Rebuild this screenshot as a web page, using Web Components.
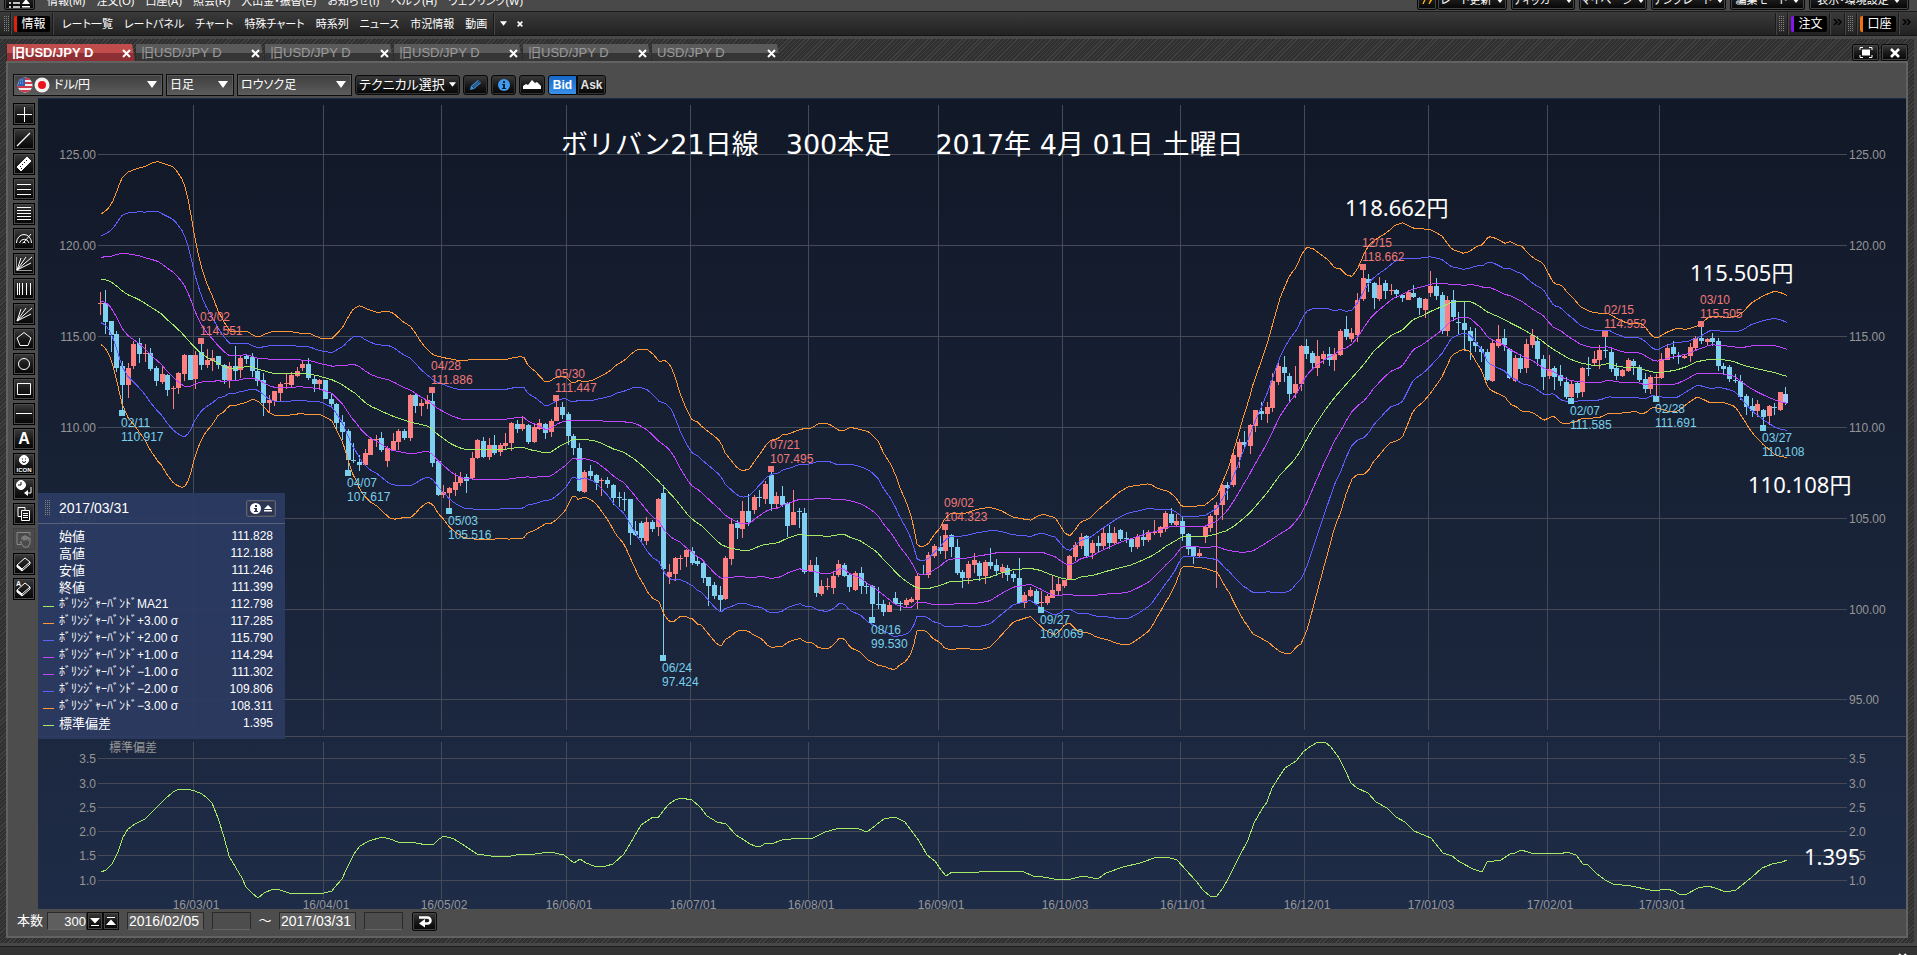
<!DOCTYPE html>
<html lang="ja">
<head>
<meta charset="utf-8">
<title>USD/JPY チャート</title>
<style>
  html, body { margin: 0; background: #484848; }
  body { min-height: 100vh; overflow: hidden; color: #fff;
    font: 12px/14px "Liberation Sans", "Noto Sans CJK JP", sans-serif; }
</style>
</head>
<body>
<app-window></app-window>

<script>
const BASE = `
  * { box-sizing: border-box; }
  button, input, select { font: inherit; color: inherit; margin: 0; padding: 0; }
  button { cursor: pointer; border: 1px solid #0a0a0a; border-radius: 2px;
    background: linear-gradient(#3c3c3c, #1a1a1a 50%, #050505); box-shadow: inset 0 0 0 1px #444; }
  svg { display: block; }
  .kana { font-feature-settings: "palt"; }
`;
function component(name, css, html, setup) {
  customElements.define(name, class extends HTMLElement {
    constructor() {
      super();
      const root = this.attachShadow({ mode: 'open' });
      const t = document.createElement('template');
      t.innerHTML = `<style>${BASE}${css}</style>${typeof html === 'function' ? html(this) : html}`;
      root.append(t.content.cloneNode(true));
      if (setup) setup(this, root);
    }
  });
}
const down = (w = 8) => `<svg width="${w}" height="5" viewBox="0 0 8 5"><path d="M0 0h8L4 5z" fill="#fff"/></svg>`;
const cross = `<svg width="9" height="9" viewBox="0 0 9 9"><path d="M1 1l7 7M8 1L1 8" stroke="currentColor" stroke-width="2" fill="none"/></svg>`;

/* ---------- menu bar ---------- */
component('menu-bar', `
  :host { display: flex; align-items: flex-end; height: 11px; overflow: hidden; background: #494949; padding: 0 8px 1px 4px; font-size: 11px; }
  .app { width: 31px; height: 18px; flex: none; margin-right: 12px; display: grid; place-items: center; padding-top: 4px; }
  nav { display: flex; gap: 11px; padding-bottom: 2px; }
  a { color: #fff; text-decoration: none; white-space: nowrap; }
  .right { margin-left: auto; display: flex; gap: 4px; }
  .right button { height: 20px; display: flex; align-items: center; justify-content: center; gap: 4px; white-space: nowrap; }
  .pair { display: flex; } .pair button:first-child { width: 20px; }
`, `
  <button class="app" aria-label="アプリ"><svg width="22" height="12" viewBox="0 0 22 12"><path d="M0 2h2M4 2h7M0 6h2M4 6h7M0 10h2M4 10h7" stroke="#fff" stroke-width="1.500"/><path d="M13 7l4-5 4 5zM13 9h8v1.500h-8z" fill="#fff"/></svg></button>
  <nav class="kana">
    ${['情報(M)', '注文(O)', '口座(A)', '照会(R)', '入出金・振替(E)', 'お知らせ(I)', 'ヘルプ(H)', 'ウェブリンク(W)'].map(t => `<a href="#">${t}</a>`).join('')}
  </nav>
  <div class="right kana">
    <span class="pair"><button aria-label="更新"><svg width="14" height="10" viewBox="0 0 14 10"><path d="M2 0l4 3-3 6 2-5-4-1zM8 0l5 3-4 6 2-5-4-1z" fill="#ffd21e" stroke="#ffb400"/></svg></button>
    <button style="width:70px">レート更新 ${down()}</button></span>
    ${[['ティッカー', 64], ['マイページ', 68], ['テンプレート', 75], ['編集モード', 75], ['表示・環境設定', 100]].map(([t, w]) => `<button style="width:${w}px">${t} ${down()}</button>`).join('')}
  </div>
`);

/* ---------- shortcut strip ---------- */
component('grip-dots', `
  :host { display: block; width: 6px; height: 16px; flex: none;
    background: linear-gradient(transparent 50%, var(--gap, #2e2e2e) 50%) 0 0 / 2px 2px,
      linear-gradient(90deg, #808080 50%, transparent 50%) 0 0 / 2px 2px; }
`, ``);
component('mode-chip', `
  :host { display: block; flex: none; margin: 0 2px; }
  button { height: 16px; width: 36px; border: 0; border-left: 3px solid var(--mark); background: #000; box-shadow: none; white-space: nowrap; }
`, `<button><slot></slot></button>`);
component('shortcut-strip', `
  :host { display: flex; align-items: center; height: 25px; padding: 0 4px; border-top: 1px solid #1c1c1c; border-bottom: 1px solid #151515;
    background: linear-gradient(#3a3a3a, #222); }
  nav { display: flex; gap: 11px; margin: 0 6px 0 8px; font-size: 11px; }
  a { color: #fff; text-decoration: none; white-space: nowrap; }
  i { width: 2px; height: 22px; flex: none; background: linear-gradient(90deg, #1a1a1a 50%, #444 50%); }
  .end { margin-left: auto; display: flex; align-items: center; }
  .bare { border: 0; background: none; box-shadow: none; display: grid; place-items: center; }
  .more { width: 13px; height: 18px; align-self: flex-start; color: #000; }
`, `
  <grip-dots></grip-dots><i></i><mode-chip style="--mark:#e0200c">情報</mode-chip><i></i>
  <nav class="kana">${['レート一覧', 'レートパネル', 'チャート', '特殊チャート', '時系列', 'ニュース', '市況情報', '動画'].map(t => `<a href="#">${t}</a>`).join('')}</nav>
  <i></i>
  <button class="bare" style="width:17px" aria-label="開く">${down(7)}</button>
  <button class="bare" style="width:15px" aria-label="閉じる"><svg width="6" height="6" viewBox="0 0 9 9"><path d="M1 1l7 7M8 1L1 8" stroke="#fff" stroke-width="2.500"/></svg></button>
  <div class="end">
    ${[['注文', '#8a12f0'], ['口座', '#f07010']].map(([t, c]) => `<i></i><grip-dots style="margin:0 2px"></grip-dots><i></i><mode-chip style="--mark:${c}">${t}</mode-chip><i></i>
    <button class="bare more" aria-label="もっと見る"><svg width="10" height="6" viewBox="0 0 10 6"><path d="M1 0l3 3-3 3M5 0l3 3-3 3" fill="none" stroke="#000" stroke-width="1.500"/></svg></button>`).join('')}
  </div>
`);

/* ---------- chart tabs ---------- */
component('chart-tab', `
  :host { display: flex; width: 129px; height: 17px; align-items: center; padding: 1px 4px 0 5px; font-size: 13px; color: #9a9a9a;
    border-left: 1px solid #2a2a2a; clip-path: polygon(1px 0, calc(100% - 3px) 0, 100% 100%, 0 100%);
    background: linear-gradient(#5a5a5a 0 50%, #353535 50%); }
  :host([active]) { background: linear-gradient(#c04c4c 0 50%, #8e2f34 50%); color: #fff; font-weight: bold; }
  .label { flex: 1; text-align: left; white-space: nowrap; }
  button { border: 0; background: none; box-shadow: none; }
  .x { color: #fff; }
`, `<button class="label"><slot></slot></button><button class="x" aria-label="タブを閉じる">${cross}</button>`);
component('tab-strip', `
  :host { display: flex; height: 22px; align-items: flex-end; padding: 0 6px; }
  .win { margin-left: auto; display: flex; gap: 2px; }
  .win button { width: 27px; height: 17px; display: grid; place-items: center; }
`, `
  <chart-tab active>旧USD/JPY D</chart-tab><chart-tab>旧USD/JPY D</chart-tab><chart-tab>旧USD/JPY D</chart-tab>
  <chart-tab>旧USD/JPY D</chart-tab><chart-tab>旧USD/JPY D</chart-tab><chart-tab>USD/JPY D</chart-tab>
  <div class="win">
    <button aria-label="最大化"><svg width="14" height="11" viewBox="0 0 14 11"><path d="M1 3V.5h3M10 .5h3V3M13 8v2.500h-3M4 10.500H1V8" fill="none" stroke="#fff"/><path d="M3 2.500h8v6H3z" fill="#fff"/></svg></button>
    <button aria-label="閉じる"><svg width="12" height="10" viewBox="0 0 12 10"><path d="M2 1l8 8M10 1L2 9" stroke="#fff" stroke-width="2.500"/></svg></button>
  </div>
`);

/* ---------- chart controls ---------- */
component('drop-box', `
  :host { display: flex; align-items: center; height: 22px; padding: 0 5px 0 3px; gap: 4px; border: 1px solid #0d0d0d;
    box-shadow: inset 0 0 0 1px #5c5c5c; background: linear-gradient(#3f3f3f, #5c5c5c); position: relative; }
  select { flex: 1; min-width: 0; height: 18px; appearance: none; border: 0; background: none; outline: 0; }
  svg { pointer-events: none; }
`, h => `<slot></slot><select class="kana" aria-label="${h.getAttribute('label')}"><option>${h.getAttribute('value')}</option></select><svg width="10" height="7" viewBox="0 0 10 7"><path d="M0 0h10L5 7z" fill="#fff"/></svg>`);
component('chart-controls', `
  :host { display: flex; align-items: center; height: 35px; padding: 8px 5px 0; gap: 3px; background: #4d4d4d; }
  button { height: 20px; width: 25px; display: grid; place-items: center; border-radius: 3px; box-shadow: inset 0 0 0 1px #333; }
  .tech { width: 105px; display: flex; align-items: center; justify-content: center; gap: 4px; font-size: 13px; white-space: nowrap; }
  .side { display: flex; } .side button { width: 29px; font-weight: bold; border-radius: 3px 0 0 3px; color: #e4e4e4; }
  .side button:first-child { background: linear-gradient(#1668c8, #3a90e8); box-shadow: none; color: #fff; }
  .side button:last-child { border-radius: 0 3px 3px 0; }
`, `
  <drop-box label="通貨ペア" value="ドル/円" style="width:150px">
    <svg width="33" height="16" viewBox="0 0 33 16"><defs><clipPath id="u"><circle cx="8" cy="8" r="7.500"/></clipPath></defs>
      <g clip-path="url(#u)"><path d="M0 0h16v16H0z" fill="#eee"/><path d="M0 2h16M0 6h16M0 10h16M0 14h16" stroke="#d0394a" stroke-width="2"/><path d="M0 0h8v9H0z" fill="#2f5fae"/><path d="M1 3h6M1 6h6" stroke="#9fc0f0" stroke-dasharray="1 1"/></g>
      <circle cx="25" cy="8" r="7.500" fill="#f6f2f2"/><circle cx="25" cy="8" r="4" fill="#e8141c"/></svg>
  </drop-box>
  <drop-box label="足種" value="日足" style="width:68px"></drop-box>
  <drop-box label="チャート種類" value="ロウソク足" style="width:115px"></drop-box>
  <button class="tech kana">テクニカル選択 ${down(7)}</button>
  <button aria-label="描画"><svg width="13" height="12" viewBox="0 0 13 12"><path d="M1 11l1-4 7-6 3 3-7 6z" fill="#3f8fe0"/><path d="M3 8l7-6M4 9l7-6" stroke="#16334f"/></svg></button>
  <button aria-label="情報"><svg width="12" height="12" viewBox="0 0 12 12"><circle cx="6" cy="6" r="6" fill="#3f9af0"/><path d="M5 2h2v2H5zM4 5h3v4h1v1H4V9h1V6H4z" fill="#10202e"/></svg></button>
  <button aria-label="エリア" style="width:26px"><svg width="18" height="9" viewBox="0 0 18 9"><path d="M0 9V6l3-2 2 1 4-5 3 3 2-1 4 4v3z" fill="#fff"/></svg></button>
  <span class="side"><button>Bid</button><button>Ask</button></span>
`);

/* ---------- drawing tools ---------- */
const ERASER = `<path d="M4 12l8-7 5 4-8 7z" fill="none"/><path d="M4 12l5 4v2l-5-4z" fill="#fff"/><path d="M9 18l8-7v-2"/>`;
const TOOLS = [
  ['十字線', '<path d="M11.500 4v15M4 11.500h15"/>'],
  ['直線', '<path d="M4 18L17 5" stroke-width="1.300"/>'],
  ['定規', '<path d="M4 14L14 4l4 4L8 18z" fill="#fff"/><path d="M7 13l1 1M9 11l1 1M11 9l1 1M13 7l1 1M8 16l1-1" stroke="#111" stroke-width="1"/>'],
  ['三本線', '<path d="M4 6.500h14M4 11.500h14M4 16.500h14"/>'],
  ['フィボナッチ', '<path d="M4 4.500h14M4 7.500h14M4 10.500h14M4 13.500h14M4 16.500h14"/>'],
  ['アーク', '<path d="M3.500 15a7.500 8.500 0 0 1 15 0M6.500 15a5 5.500 0 0 1 9.500 0M9.500 15a2 2 0 0 1 3 0M11 14l7-8"/>'],
  ['ファン軸', '<path d="M3.500 4v13.500H19" stroke="#999"/><path d="M4 17L8 5M4 17l9-13M4 17L19 4M4 17l14-7" />'],
  ['縦線', '<path d="M4.500 5v12M6.500 5v12M9.500 5v12M13.500 5v12M17.500 5v12"/>'],
  ['ファン', '<path d="M4 18L8 6M4 18l9-13M4 18L19 5M4 18l14-7"/>'],
  ['五角形', '<path d="M11 4.500l7 5.500-3 7.500H7L4 10z"/>'],
  ['円', '<circle cx="11" cy="11" r="5.500"/>'],
  ['四角形', '<path d="M4.500 5.500h13v11h-13z"/>'],
  ['水平線', '<path d="M3 10.500h16"/>'],
  ['文字', 'A'],
  ['アイコン', '<circle cx="11" cy="7" r="4.500" fill="#fff"/><path d="M9 6h1M12 6h1M9 8.500q2 2 4 0" stroke="#111"/><text x="11" y="19" text-anchor="middle" font-size="6" font-weight="bold" fill="#fff" stroke="none">ICON</text>'],
  ['時刻', '<circle cx="8" cy="7" r="4.500" fill="#fff"/><path d="M8 4v3H5" stroke="#111"/><path d="M18 9v6h-5"/><path d="M15 12l-4 3 4 3z" fill="#fff" stroke="none"/>'],
  ['コピー', '<path d="M5 4.500h7v3M5 4.500v9h3M8.500 7.500h8v10h-8zM10 10.500h5M10 12.500h5M10 14.500h5"/>'],
  ['手のひら', '<path d="M4 4.500h13v3M4 4.500v12h4M9 12V9h2v4M11 12V8h2v4M13 12V9h2v4M15 10h2v5l-2 4h-4l-4-5h2"/>'],
  ['消しゴム', ERASER],
  ['全消去', ERASER + '<text x="3" y="8" font-size="7" font-weight="bold" fill="#fff" stroke="none">A</text>'],
];
component('drawing-tools', `
  :host { display: flex; flex-direction: column; width: 30px; padding: 5px 0 0 5px; gap: 3px; background: #4d4d4d; flex: none; }
  button { width: 22px; height: 22px; flex: none; border-color: #000; border-radius: 0; box-shadow: inset 0 0 0 1px #4a4a4a; font-size: 16px; font-weight: bold; display: grid; place-items: center; }
  button svg { margin: -1px; }
  button:disabled { background: #4a4a4a; border-color: #3c3c3c; opacity: .8; color: #999; }
`, TOOLS.map(([n, d]) => `<button aria-label="${n}" ${n === '手のひら' ? 'disabled' : ''}>${d === 'A' ? 'A' :
  `<svg width="22" height="22" viewBox="0 0 22 22" fill="none" stroke="${n === '手のひら' ? '#999' : '#fff'}">${d}</svg>`}</button>`).join(''));

/* ---------- price chart ----------
   Each segment has its own origin; the values in it are thirds of a plot unit.
   ma = moving average, up = +3 sigma band, bars = colour x high top bottom low. */
const SEGMENTS = [
{ x: 0, y: 90,
  ma: '302,568 315,568 332,575 350,588 367,603 385,615 400,621 415,628 432,638 450,650 467,660 482,670 500,688 518,703 535,719 553,737 570,757 587,775 604,790 622,803 640,812 655,820 672,830 690,835 707,835 722,832 740,830 757,831 775,838 792,842 808,848 825,850 860,850 895,850',
  up: '302,373 320,360 335,342 350,305 365,265 382,247 400,240 418,233 435,230 450,221 472,214 490,221 505,225 520,231 530,243 545,265 557,295 570,355 580,420 592,480 605,535 620,580 640,625 655,665 672,695 688,723 720,723 740,723 760,736 775,742 800,730 820,724 860,724 890,727',
  bars: 'u302 606 638 642 675,d317 600 638 696 732,d335 693 693 735 786,d350 722 732 833 845,d368 813 828 885 960,u386 820 833 885 923,u401 753 762 828 837,d418 744 759 792 818,u436 762 788 791 817,d452 775 788 837 843,d470 828 834 873 888,u488 827 852 876 882,d503 852 855 900 918,u520 888 894 897 957,u536 846 849 894 911,u554 792 795 852 872,d571 795 795 870 870,u587 782 795 867 897,d605 762 786 825 840,u623 777 810 825 834,u638 780 803 813 843,d655 798 798 825 836,d674 822 825 870 882,u689 816 828 870 893,d707 768 828 843 870,u722 798 803 840 863,d740 792 798 806 821,d758 789 800 843 862,d773 806 842 872 888,d791 849 870 938 978,u809 915 930 938 970,u824 903 903 933 948,u842 876 882 909 936,u860 852 879 882 897,u875 846 855 885 890,u893 831 843 858 861,u908 812 822 834 843,d926 803 822 864 870,d944 858 867 882 906' },
{ x: 300, y: 280,
  ma: '0,280 35,283 60,289 95,299 125,313 150,330 170,343 190,363 210,378 230,387 250,396 275,407 300,416 330,426 360,433 385,439 400,450 415,465 430,475 450,490 470,500 490,507 530,508 570,508 600,508 625,507 650,503 675,503 690,509 710,513 740,520 755,515 775,501 800,488 820,477 835,480 855,478 890,484 920,497 940,507 970,516 1000,535 1030,560 1060,590 1075,602 1090,620 1110,640 1130,662 1150,688 1170,712 1190,728',
  up: '0,160 28,160 60,174 95,177 110,162 130,140 145,110 160,87 180,76 200,87 230,97 270,94 285,104 310,126 330,138 345,157 360,182 380,207 400,225 430,233 480,242 540,237 610,240 640,233 670,229 685,258 705,273 738,309 755,300 775,288 795,288 820,312 835,301 855,306 880,300 905,287 930,273 950,254 975,240 1000,216 1015,208 1042,208 1060,223 1077,244 1095,242 1110,253 1125,290 1140,340 1160,390 1177,420 1195,427',
  bars: 'u59 296 300 312 327,d76 300 300 357 357,d94 342 357 372 382,d109 368 372 429 453,d127 405 426 456 480,d146 447 453 540 570,d161 490 540 543 549,d179 525 545 555 573,u197 507 519 555 558,u212 477 477 525 525,u230 465 477 480 501,d245 456 474 510 516,u263 497 504 543 560,u281 459 483 510 513,u296 447 453 486 510,d314 447 453 474 480,u332 342 345 474 483,d347 339 345 378 399,u365 357 369 378 407,u382 345 360 372 387,d398 339 363 549 560,d416 540 543 645 648,u430 615 635 645 654,u449 621 624 639 684,u466 579 605 630 648,u482 576 591 609 618,d500 582 591 603 639,u518 516 534 595 600,u533 477 480 534 537,d551 471 483 531 534,u569 474 495 531 540,d583 465 495 519 525,u602 489 495 516 527,u617 459 489 498 507,u635 426 429 489 512,d652 420 432 447 459,u668 408 432 447 452,d686 432 435 486 491,u704 432 441 486 489,u719 417 429 447 450,d737 429 432 459 477,u755 417 423 456 471,u770 354 381 423 423,d788 366 381 405 416,d806 396 402 468 494,d821 462 468 504 525,d838 489 504 633 636,u854 570 575 636 639,d872 555 573 588 597,d890 582 585 609 629,u905 594 600 603 648,d922 591 600 612 624,d940 612 615 654 675,d957 636 651 654 680,d973 636 656 659 693,d992 656 657 759 795,d1007 723 753 765 768,d1025 723 729 774 782,u1040 711 726 783 795,d1058 720 726 747 756,u1076 654 657 741 768,d1090 615 639 867 1127,u1109 852 876 891 911,u1127 831 834 882 903,u1142 825 835 838 870,u1160 807 810 831 860,d1177 801 813 849 855,d1193 831 843 852 858' },
{ x: 700, y: 420,
  ma: '0,313 20,333 45,358 65,375 90,384 125,391 150,391 170,382 190,374 215,371 235,368 255,358 275,350 300,342 315,346 345,346 380,349 405,347 420,342 432,343 450,352 480,362 505,378 530,395 550,418 570,438 590,460 610,478 635,495 655,505 690,505 720,496 750,485 790,483 840,478 870,472 900,460 940,449 990,445 1020,451 1055,465 1085,475 1110,479 1130,477',
  up: '0,15 25,35 45,50 62,66 75,98 100,130 115,147 130,152 148,147 165,122 185,95 200,72 215,58 232,58 248,43 265,42 280,36 305,27 335,24 355,11 385,11 400,20 415,31 435,30 450,22 475,27 505,35 520,48 535,64 550,98 570,130 585,160 600,205 620,248 637,300 652,378 670,380 685,372 700,347 720,325 735,295 750,282 795,280 830,268 870,262 900,270 940,292 965,296 992,301 1015,287 1030,283 1065,293 1080,315 1092,336 1108,349 1125,330',
  bars: 'd10 423 429 474 489,d26 471 471 498 557,d44 486 495 528 537,d62 498 525 540 573,u77 408 414 537 540,u95 293 312 417 434,d113 300 309 324 357,u128 243 273 327 354,d146 222 273 306 318,u164 225 231 270 281,d179 210 231 234 261,u197 183 192 237 251,d215 156 164 252 272,u230 215 228 252 264,d248 198 228 255 261,d263 246 249 318 351,u281 210 276 315 315,d299 264 273 276 324,d314 264 279 456 462,u332 420 435 453 456,d349 411 435 519 531,u364 480 498 522 528,u382 474 497 500 510,u401 453 468 504 522,u416 420 432 465 471,d434 429 435 468 471,d449 462 465 501 516,u467 453 459 510 513,d484 441 459 498 522,d500 486 498 501 522,d518 495 498 552 592,d535 501 551 554 567,d551 540 552 576 588,u569 546 555 576 576,d587 516 534 552 555,d602 543 549 552 573,u620 534 540 555 560,u635 531 537 546 549,u653 462 468 540 567,d671 435 462 465 465,u686 396 405 465 474,u704 372 378 408 414,d722 348 381 393 402,u737 330 345 393 417,d755 342 345 381 411,d773 357 381 459 465,d788 450 456 474 504,u806 423 432 474 492,u824 399 420 435 459,d839 423 429 468 483,u857 420 426 468 492,d872 384 426 438 447,d890 417 435 453 468,u908 432 441 456 474,d923 435 444 465 483,d941 453 461 474 486,d959 414 474 549 552,u974 516 525 549 564,u992 501 510 528 531,d1010 507 513 552 555,u1025 513 546 549 561,u1043 522 528 549 555,u1058 468 510 534 534,u1076 474 492 513 525,u1094 480 480 498 504,u1109 405 408 480 480,u1127 366 375 411 423' },
{ x: 1080, y: 180,
  ma: '0,1191 40,1186 75,1175 110,1166 150,1156 180,1144 215,1128 240,1112 260,1097 285,1083 308,1069 340,1070 375,1070 405,1063 440,1052 465,1036 480,1024 510,998 530,975 560,940 600,885 640,843 660,815 673,790 700,743 740,683 770,645 810,600 850,555 880,515 910,487 935,465 965,452 1000,418 1030,406 1050,395 1080,382 1115,367 1140,364 1170,364 1190,374',
  up: '0,1027 30,1015 60,985 90,960 115,938 145,920 180,915 208,911 235,926 265,934 285,950 305,979 325,981 375,975 400,955 412,945 430,900 445,865 460,815 475,765 490,710 505,665 520,610 545,540 565,480 580,425 600,355 615,318 630,285 650,260 665,222 680,202 700,206 720,222 745,240 765,265 780,265 800,286 817,289 835,262 855,215 870,192 895,173 920,158 945,136 968,128 1000,145 1050,148 1085,167 1115,207 1150,220 1170,214 1190,199',
  bars: 'u5 1059 1071 1098 1107,d19 1065 1068 1128 1131,u37 1080 1089 1119 1137,d55 1068 1089 1098 1116,u71 1041 1059 1098 1107,d89 1035 1059 1089 1107,u104 1041 1059 1089 1092,d122 1047 1050 1077 1083,d139 1056 1073 1077 1089,d155 1074 1077 1101 1116,u173 1062 1071 1101 1107,d190 1050 1071 1080 1098,u206 1050 1056 1080 1086,u224 1020 1056 1059 1065,u242 1038 1041 1059 1071,u257 993 999 1047 1056,d275 985 1002 1029 1035,u290 1002 1023 1035 1041,d308 1011 1023 1062 1083,d326 1059 1062 1107 1125,d341 1098 1101 1128 1152,u359 1107 1119 1128 1134,u377 1035 1041 1068 1089,u392 1002 1008 1044 1056,u410 966 975 1005 1224,u428 912 915 975 1020,d443 906 915 924 960,u461 813 825 915 921,u479 777 786 831 864,d493 753 786 795 807,u512 732 735 798 822,u527 690 690 738 756,d545 666 693 702 720,u563 666 681 702 729,u578 579 603 684 696,u596 549 558 606 615,d613 528 561 579 606,d628 579 588 642 669,u646 558 612 639 654,u665 495 498 612 633,d680 477 498 522 537,d698 513 519 549 564,u713 480 528 564 588,u731 513 522 537 552,d748 501 522 540 558,u764 504 522 540 573,u782 447 453 525 528,d799 408 447 471 480,u815 444 459 477 486,u833 339 360 465 486,u851 270 294 357 363,d866 282 297 309 336,d884 306 309 354 387,u899 291 315 357 363,d917 300 309 333 357,u935 312 330 333 345,d950 327 330 342 354,d968 342 345 354 366,u986 330 336 360 360,d1001 315 339 351 354,d1019 351 354 384 405,u1037 354 357 390 414,u1052 273 318 339 351,d1070 294 318 348 360,d1088 336 345 453 462,u1103 348 360 453 468,d1121 330 360 411 423,d1136 396 426 429 462,d1154 366 429 450 512,d1172 441 453 483 540,d1187 444 486 498 516' },
{ x: 1480, y: 100,
  ma: '0,620 20,635 55,650 90,668 120,683 150,700 185,722 215,745 240,760 265,775 295,787 330,795 360,796 385,790 410,798 440,803 470,802 495,810 530,819 560,815 590,810 620,800 650,785 690,778 720,778 760,784 790,796 830,806 880,817 920,829',
  up: '0,437 8,434 25,409 45,414 75,430 90,424 110,435 125,437 140,455 160,474 190,490 205,520 222,552 242,553 262,577 285,600 300,619 330,635 360,640 385,640 410,655 440,669 480,669 495,680 515,707 530,715 560,697 590,685 620,688 655,677 690,648 740,652 770,650 790,635 815,608 850,587 885,573 905,579 920,586',
  bars: 'd5 738 747 756 786,d23 747 756 840 843,u38 720 729 843 846,u56 675 717 738 744,d73 687 714 735 753,d89 744 747 834 837,u107 765 774 843 846,d121 762 774 807 819,u140 717 732 804 819,u158 687 705 735 744,d173 708 723 777 798,d191 765 777 831 870,u208 765 807 828 837,d223 798 804 831 870,d242 795 825 843 858,d260 831 846 891 897,u274 843 852 891 894,d292 843 849 879 894,u308 801 804 876 891,d326 771 804 807 828,u344 753 777 789 795,u359 735 750 780 807,d377 711 750 753 774,d394 744 756 807 816,d410 789 804 828 840,u428 807 810 828 831,u446 774 780 813 816,d461 777 783 798 825,d479 795 801 840 846,d497 819 837 867 879,u512 825 831 867 882,u530 822 831 834 888,u545 759 777 834 837,u562 732 744 780 780,d581 723 741 762 777,d596 756 768 771 792,u614 762 768 774 777,u632 729 741 768 786,u647 708 714 744 750,d665 681 714 723 732,u683 714 717 726 738,d698 699 714 726 738,d716 714 723 798 813,d731 789 798 807 825,d749 795 801 837 846,d767 822 840 843 849,d782 825 843 891 900,d800 882 888 921 945,d818 894 918 933 951,u832 900 912 933 951,d850 927 930 951 975,u869 915 918 948 975,d884 909 921 924 945,u902 876 876 930 933,n917 861 882 909 915' },
];
const DEVIATION = '101,872 106,870 112,864 118,852 123,837 128,829 135,824 145,819 155,809 165,799 173,792 179,789 187,789 195,791 202,794 207,798 212,803 218,818 224,837 229,856 236,868 242,878 246,887 252,893 258,898 264,893 273,889 280,890 289,893 309,893 319,894 324,893 332,891 335,887 342,879 347,868 354,854 360,846 369,841 382,837 390,839 398,842 416,843 427,845 434,844 439,839 444,836 454,839 465,846 477,854 491,856 511,856 521,854 535,854 550,852 564,855 574,863 580,859 586,863 594,866 606,866 613,864 624,854 634,837 641,825 653,817 658,818 663,811 669,804 675,800 681,798 692,800 700,807 707,816 717,822 726,824 736,835 744,840 750,844 755,846 761,846 766,843 771,844 782,840 800,838 813,838 825,832 836,829 850,828 859,829 867,832 876,825 884,819 895,817 905,822 910,829 917,838 922,846 927,855 935,861 941,870 946,876 952,872 970,873 989,871 1012,871 1024,872 1033,876 1043,877 1060,880 1071,879 1083,876 1098,879 1106,873 1123,867 1140,863 1157,857 1167,857 1177,860 1186,870 1196,881 1203,890 1211,897 1217,896 1223,888 1228,879 1238,859 1248,840 1254,823 1262,809 1267,802 1272,788 1279,777 1285,768 1296,761 1304,751 1311,746 1318,742 1325,742 1331,747 1339,758 1346,772 1351,783 1357,788 1368,793 1376,802 1387,808 1396,817 1405,822 1414,831 1431,838 1443,853 1452,856 1460,862 1473,869 1482,872 1487,862 1501,860 1510,854 1515,853 1521,850 1528,852 1534,854 1547,853 1560,854 1567,852 1576,855 1583,864 1588,865 1596,873 1605,880 1613,884 1631,886 1650,890 1660,890 1667,889 1674,891 1679,894 1687,894 1698,888 1708,886 1715,888 1726,892 1736,890 1752,877 1762,868 1772,864 1782,862 1787,860';
const MONTHS = [[193, '16/03/01'], [323, '16/04/01'], [441, '16/05/02'], [566, '16/06/01'], [690, '16/07/01'], [808, '16/08/01'], [938, '16/09/01'], [1062, '16/10/03'], [1180, '16/11/01'], [1304, '16/12/01'], [1428, '17/01/03'], [1547, '17/02/01'], [1659, '17/03/01']];
const LEVELS = [[154, '125.00'], [245, '120.00'], [336, '115.00'], [427, '110.00'], [518, '105.00'], [609, '100.00'], [699, '95.00'], [758, '3.5'], [783, '3.0'], [807, '2.5'], [831, '2.0'], [855, '1.5'], [880, '1.0']];
const PEAKS = [
  [1, 198, 338, '03/02', '114.551'], [1, 429, 387, '04/28', '111.886'], [1, 553, 395, '05/30', '111.447'], [1, 768, 466, '07/21', '107.495'],
  [1, 942, 524, '09/02', '104.323'], [1, 1360, 264, '12/15', '118.662'], [1, 1602, 331, '02/15', '114.952'], [1, 1698, 321, '03/10', '115.505'],
  [0, 119, 410, '02/11', '110.917'], [0, 345, 470, '04/07', '107.617'], [0, 446, 508, '05/03', '105.516'], [0, 660, 655, '06/24', '97.424'],
  [0, 869, 617, '08/16', '99.530'], [0, 1038, 607, '09/27', '100.069'], [0, 1568, 398, '02/07', '111.585'], [0, 1653, 396, '02/28', '111.691'], [0, 1760, 425, '03/27', '110.108']];
const NOTES = [[1345, 216, '118.662円'], [1690, 281, '115.505円'], [1748, 493, '110.108円'], [1804, 865, '1.395']];

function series(key) {
  return SEGMENTS.flatMap(s => s[key].split(' ').map(p => { const [x, y] = p.split(',').map(Number); return [s.x + x / 3, s.y + y / 3]; }));
}
function valueAt(pts, x) {
  for (let i = 1; i < pts.length; i++) if (x <= pts[i][0]) {
    const [a, b] = [pts[i - 1], pts[i]];
    return a[1] + (b[1] - a[1]) * (x - a[0]) / (b[0] - a[0]);
  }
  return pts[pts.length - 1][1];
}
function drawChart() {
  const ma = series('ma'), up = series('up'), out = [];
  const grid = MONTHS.map(([x]) => `M${x}.5 105V730M${x}.5 742V899`).join('') +
    LEVELS.map(([y]) => `M98 ${y}.5H1847`).join('') + 'M38 736.5H1906';
  out.push(`<path d="${grid}" stroke="#464a56" fill="none"/>`);
  for (const s of SEGMENTS) for (const bar of s.bars.split(',')) {
    const [x, hi, top, bot, lo] = bar.slice(1).split(' ').map(Number);
    const px = Math.floor(s.x + x / 3), py = v => Math.round(s.y + v / 3);
    const c = { u: '#ff8080', d: '#7fd0f0', n: '#a8ccff' }[bar[0]];
    const wick = bar[0] === 'n' ? '#7fd0f0' : c;
    out.push(`<rect x="${px}" y="${py(hi)}" width="1" height="${py(lo) - py(hi)}" fill="${wick}"/><rect x="${px - 2}" y="${py(top)}" width="5" height="${Math.max(1, py(bot) - py(top))}" fill="${c}"/>`);
  }
  const xs = []; for (let x = 101; x <= 1787; x += 3) xs.push(x);
  xs.push(1787);
  [[3, '#ff9838'], [2, '#5f5fff'], [1, '#c046ff'], [0, '#a4ea68'], [-1, '#c046ff'], [-2, '#5f5fff'], [-3, '#ff9838']].forEach(([k, c]) => {
    const d = xs.map(x => { const m = valueAt(ma, x), u = valueAt(up, x); return `${x},${(m - (m - u) * k / 3).toFixed(1)}`; }).join(' ');
    out.push(`<polyline points="${d}" fill="none" stroke="${c}"/>`);
  });
  out.push(`<polyline points="${DEVIATION}" fill="none" stroke="#a4ea68"/>`);
  for (const [hi, x, y, date, price] of PEAKS) {
    const c = hi ? '#f07878' : '#78d0ea', b = hi ? y - 17 : y + 17;
    out.push(`<rect x="${x}" y="${y}" width="6" height="6" fill="${c}"/><g fill="${c}"><text x="${x + 2}" y="${b}">${date}</text><text x="${x + 2}" y="${b + 14}">${price}</text></g>`);
  }
  out.push('<g fill="#969696">');
  for (const [y, t] of LEVELS) out.push(`<text x="96" y="${y + 5}" text-anchor="end">${t}</text><text x="1849" y="${y + 5}">${t}</text>`);
  for (const [x, t] of MONTHS) out.push(`<text x="${x + 3}" y="909" text-anchor="middle">${t}</text>`);
  out.push('<text x="109" y="752">標準偏差</text></g>');
  out.push('<text class="title" x="561" y="154">ボリバン21日線　300本足　  2017年 4月 01日 土曜日</text>');
  for (const [x, y, t] of NOTES) out.push(`<text class="note" x="${x}" y="${y}">${t}</text>`);
  return out.join('');
}
component('price-chart', `
  :host { display: block; flex: 1; min-width: 0; position: relative; background: linear-gradient(#111827, #182236 50%, #1f2c47); border-top: 1px solid #1d2d48; }
  svg { width: 100%; height: auto; }
  polyline, rect, path { shape-rendering: crispEdges; }
  text { font-size: 12px; white-space: pre; }
  .title { font-family: "DejaVu Sans", "Noto Sans CJK JP", sans-serif; fill: #fff; font-size: 27px; }
  .note { font-family: "Noto Sans", "Noto Sans CJK JP", sans-serif; fill: #fff; font-size: 22px; }
  ::slotted(*) { position: absolute; left: 0; top: 394px; }
`, `<svg viewBox="38 99 1868 810" role="img" aria-label="USD/JPY 日足チャート">${drawChart()}</svg><slot></slot>`);

/* ---------- floating data panel ---------- */
const B = 'ﾎﾞﾘﾝｼﾞｬｰﾊﾞﾝﾄﾞ';
const ROWS = [['始値', '111.828'], ['高値', '112.188'], ['安値', '111.246'], ['終値', '111.399'],
  [B + 'MA21', '112.798', '#a4ea68'], [B + '+3.00 σ', '117.285', '#ff9838'], [B + '+2.00 σ', '115.790', '#5f5fff'], [B + '+1.00 σ', '114.294', '#c046ff'],
  [B + '−1.00 σ', '111.302', '#c046ff'], [B + '−2.00 σ', '109.806', '#5f5fff'], [B + '−3.00 σ', '108.311', '#ff9838'], ['標準偏差', '1.395', '#a4ea68']];
component('data-panel', `
  :host { display: block; width: 247px; background: rgba(44, 59, 98, .93); padding-bottom: 7px; }
  header { display: flex; align-items: center; height: 31px; padding: 0 9px 0 7px; border-bottom: 1px solid #59607a; margin-bottom: 4px; font-size: 14px; --gap: #2c3b62; }
  header span { flex: 1; margin-left: 8px; }
  header button { width: 30px; height: 17px; display: flex; align-items: center; justify-content: center; gap: 3px; background: #2c3654; border-color: #5a637d; }
  table { width: 100%; border-collapse: collapse; line-height: 17px; }
  th, td { padding: 0; height: 17px; font-weight: normal; text-align: left; white-space: nowrap; }
  th.jp { font-size: 13px; }
  td:first-child { width: 21px; } td:first-child i { display: block; width: 11px; height: 1px; margin: 4px 0 0 5px; background: var(--c); }
  td:last-child { text-align: right; padding-right: 12px; }
`, `
  <header><grip-dots></grip-dots><span>2017/03/31</span>
    <button aria-label="情報を閉じる"><svg width="11" height="11" viewBox="0 0 11 11"><circle cx="5.500" cy="5.500" r="5.500" fill="#fff"/><path d="M5 2h2v2H5zM4 5h3v3h1v1H4V8h1V6H4z" fill="#2c3654"/></svg><svg width="8" height="7" viewBox="0 0 8 7"><path d="M0 4l4-4 4 4zM0 5h8v1.500H0z" fill="#fff"/></svg></button></header>
  <table>${ROWS.map(([n, v, c]) => `<tr><td>${c ? `<i style="--c:${c}"></i>` : ''}</td><th scope="row" class="${n.startsWith(B) ? '' : 'jp'}">${n}</th><td>${v}</td></tr>`).join('')}</table>
`);

/* ---------- range bar ---------- */
component('range-bar', `
  :host { display: flex; align-items: center; height: 27px; padding: 0 9px 3px; background: #4d4d4d; font-size: 13px; }
  input { height: 18px; border: 1px solid #2a2a2a; border-bottom-color: #666; background: #5e5e5e; border-radius: 0; outline: 0; }
  .n { width: 40px; margin-left: 4px; text-align: right; }
  .date { width: 77px; padding-left: 1px; font-size: 14px; } .time { width: 39px; background: none; margin-left: 8px; }
  .step { width: 16px; height: 18px; display: grid; place-items: center; border-radius: 0; }
  .tilde { width: 28px; text-align: center; }
  .back { width: 25px; height: 19px; margin-left: 9px; display: grid; place-items: center; }
`, `
  <label for="n">本数</label><input id="n" class="n" value="300">
  <button class="step" aria-label="減らす"><svg width="10" height="9" viewBox="0 0 10 9"><path d="M0 1h10L5 6.500zM1 8h8v1H1z" fill="#fff"/></svg></button>
  <button class="step" aria-label="増やす"><svg width="10" height="9" viewBox="0 0 10 9"><path d="M0 8h10L5 2.500zM1 0h8v1H1z" fill="#fff"/></svg></button>
  <input class="date" style="margin-left:8px" value="2016/02/05" aria-label="開始日"><input class="time" aria-label="開始時刻">
  <span class="tilde">～</span>
  <input class="date" value="2017/03/31" aria-label="終了日"><input class="time" aria-label="終了時刻">
  <button class="back" aria-label="戻す"><svg width="14" height="13" viewBox="0 0 14 13"><path d="M1 2.500h8.500a3 3 0 0 1 0 6H6" fill="none" stroke="#fff" stroke-width="2.500"/><path d="M7 4v8.500L1 8.500z" fill="#fff"/></svg></button>
`);

/* ---------- window shell ---------- */
component('app-window', `
  :host { display: block; background: #484848; }
  .space { margin-top: 3px; border-right: 3px solid #454545; padding-bottom: 5px;
    background: repeating-linear-gradient(135deg, #303030 0 2px, #414141 2px 3px); }
  .pane { margin: 0 6px; border: 2px solid #626262; }
  .main { display: flex; }
  footer { margin-top: 3px; border-top: 1px solid #1c1c1c; height: 24px; background: #333; display: flex; justify-content: flex-end; align-items: flex-start; padding: 6px 10px; }
`, `
  <menu-bar></menu-bar>
  <shortcut-strip></shortcut-strip>
  <div class="space">
    <tab-strip></tab-strip>
    <section class="pane">
      <chart-controls></chart-controls>
      <div class="main"><drawing-tools></drawing-tools><price-chart><data-panel></data-panel></price-chart></div>
      <range-bar></range-bar>
    </section>
  </div>
  <footer>${cross}</footer>
`);
</script>
</body>
</html>
